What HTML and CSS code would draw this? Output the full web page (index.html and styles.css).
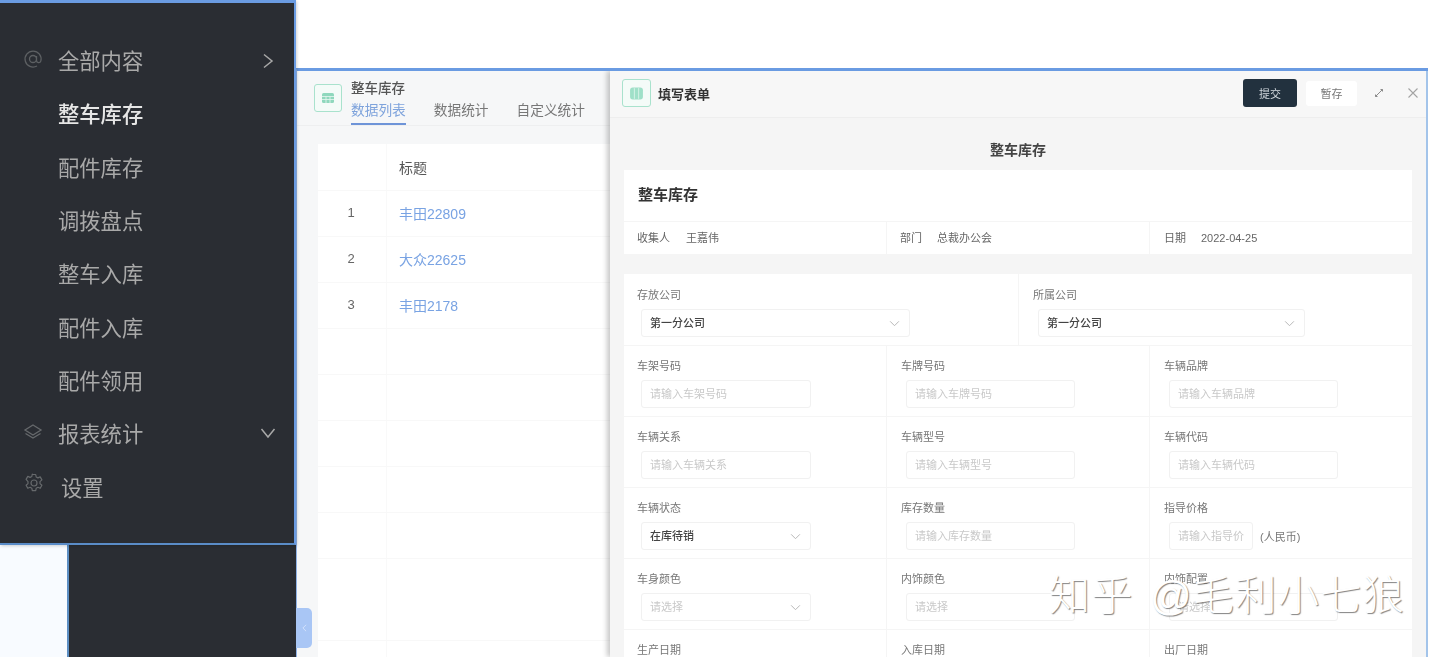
FILE: index.html
```html
<!DOCTYPE html>
<html lang="zh-CN">
<head>
<meta charset="utf-8">
<title>整车库存</title>
<link rel="stylesheet" href="styles.css">
</head>
<body>
<div class="page">
  <div class="gutter"></div>
  <div class="side"></div>
  <main class="main">
    <header class="list-head">
      <span class="app-icon"><svg viewBox="0 0 14 14" width="14" height="14"><rect x="1" y="2" width="12" height="10" rx="1.5" fill="#8fd8bd"/><path d="M1 5.5h12M1 8.500h12M5 5.500v6.500M9 5.500v6.500" stroke="#e8f7f1" stroke-width=".8"/></svg></span>
      <div class="list-titles">
        <div class="list-title">整车库存</div>
        <nav class="tabs">
          <span class="tab tab-on">数据列表</span>
          <span class="tab">数据统计</span>
          <span class="tab">自定义统计</span>
        </nav>
      </div>
    </header>
    <div class="table">
      <div class="tr th"><div class="td-n"></div><div class="td-t">标题</div></div>
      <div class="tr"><div class="td-n">1</div><div class="td-t link">丰田22809</div></div>
      <div class="tr"><div class="td-n">2</div><div class="td-t link">大众22625</div></div>
      <div class="tr"><div class="td-n">3</div><div class="td-t link">丰田2178</div></div>
      <div class="tr"><div class="td-n"></div><div class="td-t"></div></div>
      <div class="tr"><div class="td-n"></div><div class="td-t"></div></div>
      <div class="tr"><div class="td-n"></div><div class="td-t"></div></div>
      <div class="tr"><div class="td-n"></div><div class="td-t"></div></div>
      <div class="tr"><div class="td-n"></div><div class="td-t"></div></div>
      <div class="tr tr-tall"><div class="td-n"></div><div class="td-t"></div></div>
      <div class="tr"><div class="td-n"></div><div class="td-t"></div></div>
    </div>

    <section class="modal">
      <header class="modal-head">
        <span class="app-icon app-icon-lg"><svg viewBox="0 0 14 14" width="15" height="15"><rect x="1" y="1.500" width="12" height="11" rx="2.500" fill="#9fe0c8"/><path d="M5 2v10M9 2v10" stroke="#dff5ec" stroke-width=".8"/></svg></span>
        <span class="modal-title">填写表单</span>
        <span class="spacer"></span>
        <button class="btn btn-dark">提交</button>
        <button class="btn btn-light">暂存</button>
        <svg class="ico-expand" viewBox="0 0 12 12" width="12" height="12"><path d="M2.500 9.500 9.500 2.500M7.500 2.500h2v2M2.500 7.500v2h2" fill="none" stroke="#8b8b8b" stroke-width="1"/></svg>
        <svg class="ico-close" viewBox="0 0 12 12" width="12" height="12"><path d="M1.500 1.500 10.500 10.500M10.500 1.500 1.500 10.500" fill="none" stroke="#a3a3a3" stroke-width="1.100"/></svg>
      </header>
      <div class="form-body">
        <h1 class="form-name">整车库存</h1>
        <div class="card-title">整车库存</div>
        <div class="meta">
          <div class="meta-cell"><span class="meta-k">收集人</span><span class="meta-v">王嘉伟</span></div>
          <div class="meta-cell"><span class="meta-k">部门</span><span class="meta-v">总裁办公会</span></div>
          <div class="meta-cell"><span class="meta-k">日期</span><span class="meta-v">2022-04-25</span></div>
        </div>
        <div class="fields">
          <div class="grid grid-2">
            <div class="field field-top"><label class="lab">存放公司</label><div class="ctl ctl-wide ctl-val">第一分公司<svg class="chev" viewBox="0 0 12 8" width="11" height="7"><path d="M1 1.500 6 6.500 11 1.500" fill="none" stroke="#b5b5b5" stroke-width="1.100"/></svg></div></div>
            <div class="field field-top"><label class="lab">所属公司</label><div class="ctl ctl-wide ctl-val">第一分公司<svg class="chev" viewBox="0 0 12 8" width="11" height="7"><path d="M1 1.500 6 6.500 11 1.500" fill="none" stroke="#b5b5b5" stroke-width="1.100"/></svg></div></div>
          </div>
          <div class="grid grid-3">
            <div class="field"><label class="lab">车架号码</label><div class="ctl">请输入车架号码</div></div>
            <div class="field"><label class="lab">车牌号码</label><div class="ctl">请输入车牌号码</div></div>
            <div class="field"><label class="lab">车辆品牌</label><div class="ctl">请输入车辆品牌</div></div>
            <div class="field"><label class="lab">车辆关系</label><div class="ctl">请输入车辆关系</div></div>
            <div class="field"><label class="lab">车辆型号</label><div class="ctl">请输入车辆型号</div></div>
            <div class="field"><label class="lab">车辆代码</label><div class="ctl">请输入车辆代码</div></div>
            <div class="field"><label class="lab">车辆状态</label><div class="ctl ctl-val">在库待销<svg class="chev" viewBox="0 0 12 8" width="11" height="7"><path d="M1 1.500 6 6.500 11 1.500" fill="none" stroke="#b5b5b5" stroke-width="1.100"/></svg></div></div>
            <div class="field"><label class="lab">库存数量</label><div class="ctl">请输入库存数量</div></div>
            <div class="field"><label class="lab">指导价格</label><div class="price"><div class="ctl ctl-short">请输入指导价</div><span class="unit">(人民币)</span></div></div>
            <div class="field"><label class="lab">车身颜色</label><div class="ctl">请选择<svg class="chev" viewBox="0 0 12 8" width="11" height="7"><path d="M1 1.500 6 6.500 11 1.500" fill="none" stroke="#b5b5b5" stroke-width="1.100"/></svg></div></div>
            <div class="field"><label class="lab">内饰颜色</label><div class="ctl">请选择</div></div>
            <div class="field"><label class="lab">内饰配置</label><div class="ctl">请选择</div></div>
            <div class="field"><label class="lab">生产日期</label></div>
            <div class="field"><label class="lab">入库日期</label></div>
            <div class="field"><label class="lab">出厂日期</label></div>
          </div>
        </div>
      </div>
    </section>
  </main>
</div>

<aside class="menu">
  <div class="mi"><svg class="mi-ico" viewBox="0 0 20 20" width="20" height="20"><path d="M13.500 10a3.500 3.500 0 1 1-7 0 3.500 3.500 0 0 1 7 0Zm0-3v4.500a2.200 2.200 0 0 0 4.300.6A8 8 0 1 0 14 17" fill="none" stroke="#5d6063" stroke-width="1.300"/></svg><span>全部内容</span><svg class="mi-arrow" viewBox="0 0 12 16" width="12" height="16"><path d="M2 1.500 10 8 2 14.500" fill="none" stroke="#a8a8a8" stroke-width="1.500"/></svg></div>
  <div class="mi mi-on"><span>整车库存</span></div>
  <div class="mi"><span>配件库存</span></div>
  <div class="mi"><span>调拨盘点</span></div>
  <div class="mi"><span>整车入库</span></div>
  <div class="mi"><span>配件入库</span></div>
  <div class="mi"><span>配件领用</span></div>
  <div class="mi"><svg class="mi-ico" viewBox="0 0 20 20" width="20" height="20"><path d="M10 3 18 8l-8 5-8-5 8-5Z" fill="none" stroke="#66696c" stroke-width="1.300"/><path d="M2.500 11.500 10 16l7.500-4.500" fill="none" stroke="#66696c" stroke-width="1.300"/></svg><span>报表统计</span><svg class="mi-arrow mi-arrow-down" viewBox="0 0 16 12" width="16" height="12"><path d="M1.500 2 8 10l6.500-8" fill="none" stroke="#a8a8a8" stroke-width="1.500"/></svg></div>
  <div class="mi mi-set"><svg class="mi-ico" viewBox="0 0 20 20" width="20" height="20"><circle cx="10" cy="10" r="3" fill="none" stroke="#66696c" stroke-width="1.200"/><path d="M8.300 1.500h3.400l.5 2.500 1.700.9 2.300-1 1.700 3-1.900 1.700v2l1.900 1.700-1.700 3-2.300-1-1.700.9-.5 2.500H8.300l-.5-2.500-1.700-.9-2.300 1-1.700-3 1.900-1.700v-2L2.100 6.400l1.700-3 2.300 1 1.700-.9.5-2.500Z" fill="none" stroke="#66696c" stroke-width="1.200" stroke-linejoin="round"/></svg><span>设置</span></div>
</aside>

<div class="handle"><svg viewBox="0 0 6 10" width="5" height="8"><path d="M5 1 1 5l4 4" fill="none" stroke="#d4e2fb" stroke-width="1.200"/></svg></div>
<div class="mark">知乎 @毛利小七狼</div>
</body>
</html>
```
FILE: styles.css
```css
* { box-sizing: border-box; }
html, body { margin: 0; height: 657px; overflow: hidden; background: #fff; }
body { position: relative; font-family: "Liberation Sans", "Noto Sans CJK SC", sans-serif; color: #555; }

.page { display: flex; height: 657px; filter: blur(.5px); }
.gutter { width: 67px; flex: none; background: #f8fbff; }
.side { width: 229px; flex: none; background: #2a2d33; border-left: 2px solid #5d8fc4; }
.main { position: relative; width: 1132px; flex: none; margin-top: 68px; background: #f6f7f8; border-top: 3px solid #6a9be2; border-left: 1px solid #8fb2e6; overflow: hidden; }

.list-head { display: flex; height: 55px; padding: 13px 0 0 17px; gap: 9px; border-bottom: 1px solid #eeeff0; }
.app-icon { display: flex; align-items: center; justify-content: center; width: 28px; height: 28px; background: #f4fbf8; border: 1px solid #a9e2cd; border-radius: 3px; flex: none; }
.app-icon-lg { width: 29px; height: 28px; }
.list-titles { margin-top: -5px; }
.list-title { font-size: 13.500px; line-height: 20px; color: #555; font-weight: 500; }
.tabs { display: flex; gap: 28px; margin-top: 2px; }
.tab { font-size: 13.700px; line-height: 20px; height: 24px; color: #777; }
.tab-on { color: #7ea3dc; border-bottom: 2px solid #6e94d8; }

.table { margin: 18px 0 0 21px; width: 292px; background: #fff; }
.tr { display: flex; height: 46px; border-bottom: 1px solid #f8f8f8; }
.tr-tall { height: 82px; }
.th { height: 47px; color: #555; }
.td-n { width: 69px; border-right: 1px solid #f9f9f9; font-size: 13px; color: #666; display: flex; align-items: center; justify-content: center; padding: 0 2px 2px 0; }
.td-t { flex: 1; padding-left: 12px; font-size: 14px; display: flex; align-items: center; }
.link { color: #79a3e3; padding-bottom: 1px; }

.modal { position: absolute; left: 313px; top: 0; bottom: 0; width: 818px; background: #f5f5f5; box-shadow: -3px 0 5px rgba(0,0,0,.22); border-right: 2px solid #a3c4ea; display: flex; flex-direction: column; }
.modal-head { display: flex; align-items: center; height: 47px; flex: none; padding: 0 7px 2px 12px; border-bottom: 1px solid #eeeeee; background: #f7f7f7; }
.modal-title { margin-left: 7px; font-size: 13px; font-weight: 700; color: #333; }
.spacer { flex: 1; }
.btn { font: inherit; font-size: 11px; border: 0; padding: 0; border-radius: 3px; }
.btn-dark { width: 54px; height: 28px; background: #22313e; color: #d5dbe0; }
.btn-light { width: 51px; height: 25px; margin-left: 9px; background: #fff; color: #777; }
.ico-expand { margin-left: 16px; }
.ico-close { margin-left: 22px; }

.form-body { padding: 0 14px; flex: 1; }
.form-name { margin: 0; height: 52px; font-size: 14px; font-weight: 700; color: #444; line-height: 64px; text-align: center; }
.card-title { height: 51px; padding-left: 14px; background: #fff; font-size: 15px; font-weight: 700; color: #333; line-height: 50px; }
.meta { display: grid; grid-template-columns: 262px 262px 1fr; gap: 1px; margin-top: 1px; }
.meta-cell { height: 32px; background: #fff; padding-left: 13px; font-size: 11px; line-height: 32px; color: #666; }
.meta-cell:nth-child(3) { padding-left: 14px; }
.meta-v { margin-left: 15px; }
.meta-cell:nth-child(1) .meta-v { margin-left: 16px; }

.fields { margin-top: 20px; background: #f5f5f5; }
.grid { display: grid; gap: 1px; }
.grid-2 { grid-template-columns: 394px 1fr; margin-bottom: 1px; }
.grid-3 { grid-template-columns: 262px 262px 1fr; }
.field { height: 70px; background: #fff; padding: 14px 0 0 13px; }
.field-top { height: 71px; padding-top: 15px; }
.grid-3 .field:not(:nth-child(3n+1)) { padding-left: 14px; }
.grid-2 .field:nth-child(2) { padding-left: 14px; }
.lab { display: block; font-size: 11px; line-height: 13px; color: #777; margin-bottom: 7px; }
.ctl { position: relative; width: 170px; height: 28px; margin-left: 4px; padding-left: 8px; border: 1px solid #f1f1f1; border-radius: 3px; background: #fff; font-size: 11px; line-height: 26px; color: #c9c9c9; }
.grid-3 .field:not(:nth-child(3n+1)) .ctl { margin-left: 5px; width: 169px; }
.grid-2 .field:nth-child(2) .ctl { margin-left: 5px; width: 267px; }
.ctl-wide { width: 269px; }
.ctl-val { color: #444; font-weight: 500; }
.grid-3 .field:not(:nth-child(3n+1)) .ctl-short { width: 84px; white-space: nowrap; overflow: hidden; }
.chev { position: absolute; right: 9px; top: 10px; }
.price { display: flex; align-items: center; }
.unit { margin-left: 7px; font-size: 11px; color: #777; }

.menu { position: absolute; left: 0; top: 0; width: 296px; height: 545px; padding-top: 30px; background: #2a2d33; border-top: 3px solid #6a9be2; border-right: 2px solid #6a9be2; border-bottom: 2px solid #5a8cc8; box-shadow: 1px 1px 3px rgba(0,0,0,.18); filter: blur(.4px); }
.mi { position: relative; height: 53.300px; padding-left: 58px; display: flex; align-items: center; font-size: 21.300px; color: #a9a9a9; }
.mi-on { color: #e6e6e6; font-weight: 500; }
.mi-ico { position: absolute; left: 23px; top: 16px; }
.mi-arrow { position: absolute; left: 262px; top: 20px; }
.mi-arrow-down { left: 260px; top: 21px; }
.mi-set { padding-left: 61px; }
.mi-set .mi-ico { left: 24px; top: 14px; }

.handle { position: absolute; left: 296px; top: 608px; width: 16px; height: 40px; background: #a9c6f5; border-radius: 0 5px 5px 0; display: flex; align-items: center; justify-content: center; }
.mark { position: absolute; left: 1049px; top: 571px; font-size: 41px; line-height: 50px; letter-spacing: 1.500px; word-spacing: 3px; white-space: nowrap; font-weight: 300; color: #fff; text-shadow: 1px 1px 1px rgba(90,90,90,.75); }
```
